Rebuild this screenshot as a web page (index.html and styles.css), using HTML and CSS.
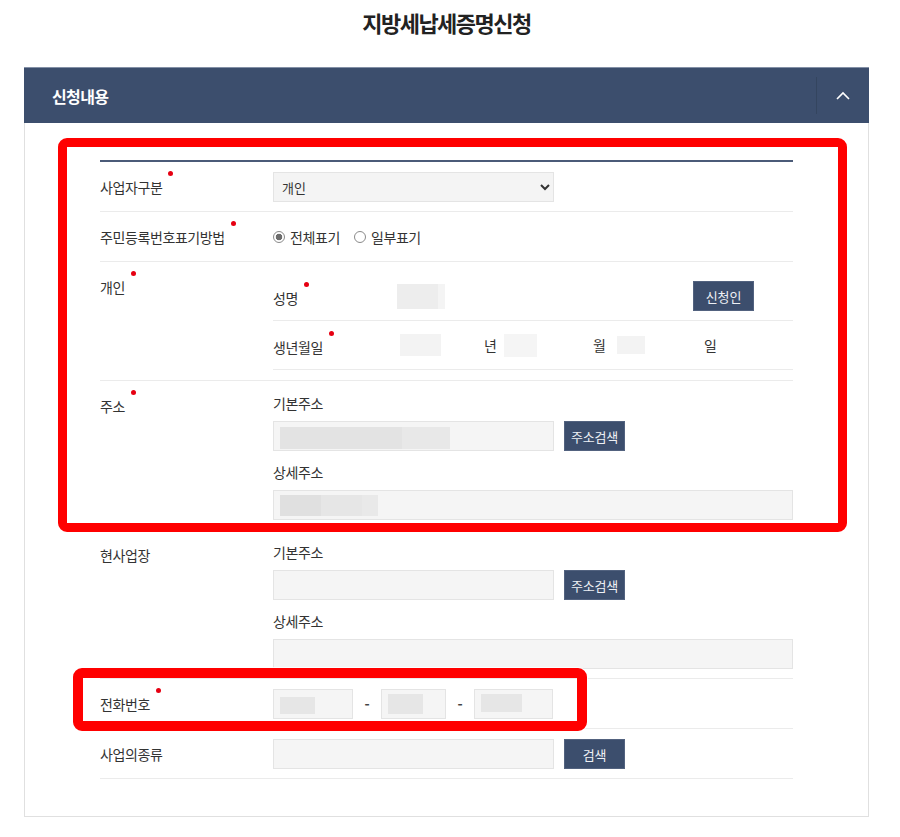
FILE: index.html
```html
<!DOCTYPE html>
<html lang="ko">

<head>
    <meta charset="utf-8">
    <title>지방세납세증명신청</title>
    <link rel="stylesheet" href="styles.css">
</head>

<body>
    <div class="page">
        <h1 class="page-title">지방세납세증명신청</h1>

        <section class="panel">
            <div class="panel-head">
                <h2 class="panel-title">신청내용</h2>
                <button class="panel-toggle" type="button" aria-label="접기">
                    <svg width="14" height="9" viewBox="0 0 14 9">
                        <polyline points="1,8 7,2 13,8" fill="none" stroke="#fff" stroke-width="1.6" />
                    </svg>
                </button>
            </div>

            <div class="panel-body">
                <div class="form">
                    <div class="row">
                        <div class="label"><span class="req">사업자구분</span></div>
                        <div class="field">
                            <select class="select">
                                <option>개인</option>
                                <option>법인</option>
                            </select>
                        </div>
                    </div>

                    <div class="row">
                        <div class="label"><span class="req">주민등록번호표기방법</span></div>
                        <div class="field">
                            <label class="radio"><input type="radio" name="rrn" checked> 전체표기</label>
                            <label class="radio"><input type="radio" name="rrn"> 일부표기</label>
                        </div>
                    </div>

                    <div class="row row-top">
                        <div class="label"><span class="req">개인</span></div>
                        <div class="field field-stack field-person">
                            <div class="sub-row">
                                <span class="sub-label req">성명</span>
                                <span class="blur blur-name"></span>
                                <button class="btn btn-applicant" type="button">신청인</button>
                            </div>
                            <div class="sub-row">
                                <span class="sub-label sub-label-birth req">생년월일</span>
                                <span class="blur blur-year"></span>
                                <span class="unit unit-year">년</span>
                                <span class="blur blur-month"></span>
                                <span class="unit unit-month">월</span>
                                <span class="blur blur-day"></span>
                                <span class="unit unit-day">일</span>
                            </div>
                        </div>
                    </div>

                    <div class="row row-top">
                        <div class="label"><span class="req">주소</span></div>
                        <div class="field field-stack">
                            <div class="addr-label">기본주소</div>
                            <div class="addr-line">
                                <div class="input input-half"><span class="blur blur-addr"></span></div>
                                <button class="btn" type="button">주소검색</button>
                            </div>
                            <div class="addr-label">상세주소</div>
                            <div class="input input-full"><span class="blur blur-detail"></span></div>
                        </div>
                    </div>

                    <div class="row row-top">
                        <div class="label">현사업장</div>
                        <div class="field field-stack">
                            <div class="addr-label">기본주소</div>
                            <div class="addr-line">
                                <div class="input input-half"></div>
                                <button class="btn" type="button">주소검색</button>
                            </div>
                            <div class="addr-label">상세주소</div>
                            <div class="input input-full"></div>
                        </div>
                    </div>

                    <div class="row">
                        <div class="label"><span class="req">전화번호</span></div>
                        <div class="field">
                            <div class="input tel tel-1"><span class="blur blur-tel1"></span></div>
                            <span class="dash">-</span>
                            <div class="input tel tel-2"><span class="blur blur-tel2"></span></div>
                            <span class="dash">-</span>
                            <div class="input tel tel-3"><span class="blur blur-tel3"></span></div>
                        </div>
                    </div>

                    <div class="row">
                        <div class="label">사업의종류</div>
                        <div class="field">
                            <div class="input input-half"></div>
                            <button class="btn" type="button">검색</button>
                        </div>
                    </div>
                </div>
            </div>
        </section>

        <!-- review marks -->
        <div class="mark mark-main"></div>
        <div class="mark mark-phone"></div>
    </div>
</body>

</html>
```

FILE: styles.css
```css
body {
    margin: 0;
    background-color: #fff;
    color: #333;
    font-family: 'Noto Sans CJK KR', 'Noto Sans', sans-serif;
    font-size: 14px;
}

.page {
    position: relative;
    width: 900px;
    height: 837px;
    overflow: hidden;
}

.page-title {
    margin: 0 31px 30px 24px;
    padding-top: 7px;
    line-height: 30px;
    font-size: 22px;
    font-weight: bold;
    letter-spacing: -1.5px;
    text-align: center;
    color: #222;
}

/* panel */
.panel {
    margin: 0 31px 0 24px;
    border: 1px solid #e0e0e0;
    border-top: none;
}

.panel-head {
    display: flex;
    align-items: center;
    height: 56px;
    padding-left: 28px;
    background-color: #3c4e6d;
    border-top: 1px solid #8390a6;
    box-sizing: border-box;
    margin: 0 -1px;
}

.panel-title {
    flex: 1;
    margin: 0;
    font-size: 16px;
    font-weight: bold;
    letter-spacing: -0.6px;
    color: #fff;
}

.panel-toggle {
    display: flex;
    align-items: center;
    justify-content: center;
    width: 53px;
    height: 37px;
    padding: 0;
    background: none;
    border: none;
    border-left: 1px solid #34455f;
    cursor: pointer;
}

.panel-body {
    padding: 37px 75px 37px;
}

/* form table */
.form {
    border-top: 2px solid #4b5b78;
}

.row {
    display: grid;
    grid-template-columns: 173px 1fr;
    min-height: 50px;
    box-sizing: border-box;
    border-bottom: 1px solid #ebebeb;
}

.label {
    align-self: center;
    line-height: 20px;
    letter-spacing: -0.4px;
}

.row-top .label {
    align-self: start;
    padding-top: 15px;
}

.req::after {
    content: "";
    display: inline-block;
    width: 5px;
    height: 5px;
    margin-left: 6px;
    border-radius: 50%;
    background-color: #e60012;
    vertical-align: top;
    position: relative;
    top: -6px;
}

.field {
    display: flex;
    align-items: center;
    padding: 10px 0 9px;
}

.field-stack {
    flex-direction: column;
    align-items: stretch;
    padding: 10px 0 9px;
}

.field-person {
    padding: 10px 0 10px;
}

.select {
    width: 281px;
    height: 30px;
    padding: 0 4px;
    font-family: inherit;
    font-size: 13px;
    color: #333;
    background-color: #f4f4f4;
    border: 1px solid #e4e4e4;
    border-radius: 0;
}

.radio {
    display: flex;
    align-items: center;
    margin-right: 14px;
    font-size: 14px;
    letter-spacing: -0.4px;
    line-height: 20px;
}

.radio input {
    appearance: none;
    width: 12px;
    height: 12px;
    margin: 0 5px 0 0;
    border: 1px solid #8a8a8a;
    border-radius: 50%;
    background-color: #fff;
}

.radio input:checked {
    background: radial-gradient(circle, #6d6d6d 0 3px, #fff 3.6px);
}

/* sub rows of 개인 */
.sub-row {
    display: flex;
    align-items: center;
    height: 49px;
    box-sizing: border-box;
    border-bottom: 1px solid #ebebeb;
    line-height: 20px;
    letter-spacing: -0.4px;
}

.sub-label {
    width: 124px;
    padding-top: 4px;
}

.sub-label-birth {
    width: 127px;
}

.unit {
    width: 13px;
}

.unit-year {
    margin: 0 7px 0 43px;
}

.unit-month {
    margin: 0 11px 0 56px;
}

.unit-day {
    margin-left: 59px;
}

/* redacted values */
.blur {
    display: block;
    flex: none;
    background-color: #e6e6e6;
}

.blur-name {
    width: 48px;
    height: 25px;
    background: linear-gradient(to right, #ededed 85%, #f4f4f4 85%);
}

.blur-year {
    width: 41px;
    height: 22px;
    background-color: #f3f3f3;
}

.blur-month {
    width: 33px;
    height: 23px;
    background-color: #f5f5f5;
}

.blur-day {
    width: 28px;
    height: 18px;
    background-color: #f3f3f3;
}

.blur-addr {
    width: 170px;
    height: 22px;
    margin-top: 4px;
    background: linear-gradient(to right, #e3e3e3 72%, #e8e8e8 72%);
}

.blur-detail {
    width: 98px;
    height: 21px;
    background: linear-gradient(to right, #e0e0e0 42%, #e6e6e6 42%, #e6e6e6 84%, #e9e9e9 84%);
}

.blur-tel1 {
    width: 35px;
    height: 17px;
    margin-top: 2px;
}

.blur-tel2 {
    width: 35px;
    height: 20px;
}

.blur-tel3 {
    width: 41px;
    height: 18px;
    margin-top: -2px;
}

/* inputs and buttons */
.input {
    display: flex;
    align-items: center;
    height: 30px;
    padding-left: 6px;
    box-sizing: border-box;
    background-color: #f5f5f5;
    border: 1px solid #e4e4e4;
}

.input-half {
    width: 281px;
}

.input-full {
    width: 100%;
}

.tel-1 {
    width: 80px;
}

.tel-2 {
    width: 65px;
}

.tel-3 {
    width: 79px;
}

.dash {
    width: 28px;
    text-align: center;
    font-weight: bold;
    color: #444;
}

.btn {
    width: 61px;
    height: 30px;
    margin-left: 10px;
    padding: 0;
    font-family: inherit;
    font-size: 13px;
    letter-spacing: -0.2px;
    color: #eef1f5;
    background-color: #3c4e6d;
    border: 1px solid #52627f;
    cursor: pointer;
}

.btn-applicant {
    margin-left: 248px;
}

.addr-label {
    line-height: 24px;
    letter-spacing: -0.4px;
}

.addr-line {
    display: flex;
    align-items: center;
    margin: 6px 0 9px;
}

.addr-line + .addr-label + .input {
    margin-top: 6px;
}

/* red review marks over the screenshot */
.mark {
    position: absolute;
    box-sizing: border-box;
    border: 9px solid #ff0000;
    border-radius: 9px;
    box-shadow: 0 0 0 1px rgba(255, 255, 255, 0.8);
}

.mark-main {
    left: 58px;
    top: 138px;
    width: 789px;
    height: 394px;
}

.mark-phone {
    left: 73px;
    top: 668px;
    width: 514px;
    height: 63px;
    border-width: 10px;
}
```
